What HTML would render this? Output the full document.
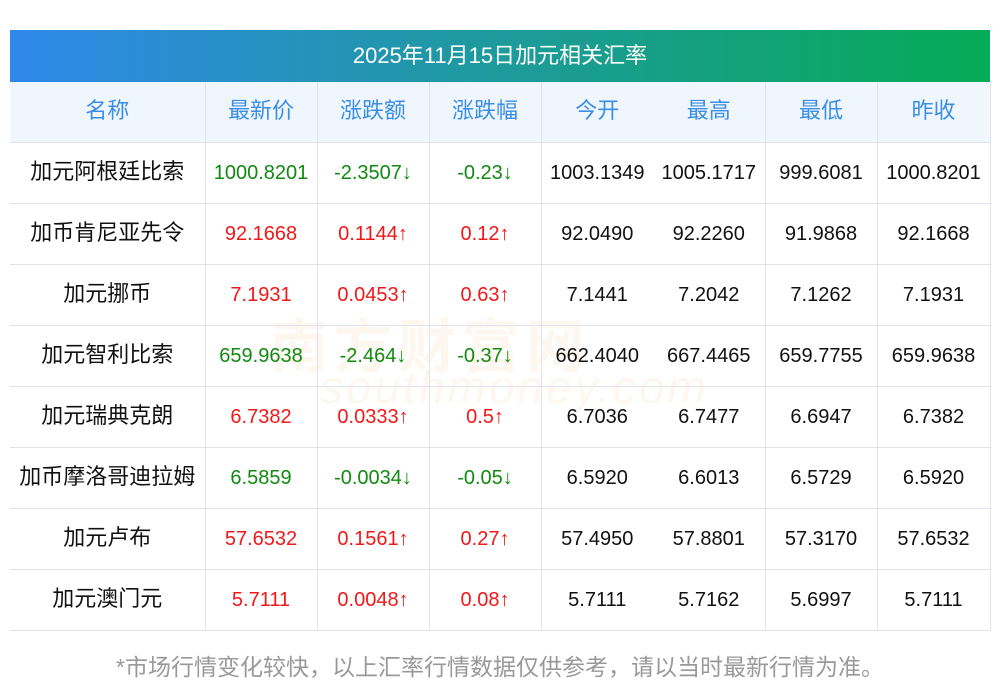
<!DOCTYPE html>
<html><head><meta charset="utf-8"><style>
body{margin:0;background:#fff;font-family:"Liberation Sans","Noto Sans CJK SC",sans-serif;}
.t{position:absolute;left:10px;top:30px;width:980px;}
.title{height:52px;background:linear-gradient(90deg,#2f88ea,#1e9a9c 50%,#05ab55);color:#fff;font-size:22px;line-height:52px;text-align:center;}
table{border-collapse:collapse;width:980px;table-layout:fixed;}
td{height:60px;border-bottom:1px solid #e0e3ec;border-right:1px solid #e0e3ec;text-align:center;font-size:20px;color:#111;padding:0;white-space:nowrap;line-height:24px;}
td.nb{border-right:none;}
td.n{font-size:22px;padding-bottom:2px;height:58px;}
tr.h td{background:#f0f6fe;color:#3a8ee6;height:58px;font-size:22px;padding-bottom:2px;}
.g{color:#118a11}.r{color:#f01818}
.foot{position:absolute;top:648px;left:0;width:1000px;text-align:center;color:#999;font-size:23px;}
.wm{position:absolute;left:270px;top:300px;font-size:58px;color:rgba(240,200,150,.15);font-weight:bold;letter-spacing:6px;}
.wm2{position:absolute;left:320px;top:360px;font-size:46px;color:rgba(240,200,150,.15);font-style:italic;letter-spacing:3px;}
</style></head><body>
<div class="wm">南方财富网</div><div class="wm2">southmoney.com</div>
<div class="t">
<div class="title">2025年11月15日加元相关汇率</div>
<table>
<colgroup><col style="width:195px"><col style="width:112px"><col style="width:112px"><col style="width:112px"><col style="width:112px"><col style="width:112px"><col style="width:112px"><col style="width:113px"></colgroup>
<tr class="h"><td>名称</td><td>最新价</td><td>涨跌额</td><td>涨跌幅</td><td class="nb">今开</td><td>最高</td><td>最低</td><td>昨收</td></tr>
<tr><td class="n">加元阿根廷比索</td><td class="g">1000.8201</td><td class="g">-2.3507↓</td><td class="g">-0.23↓</td><td class="nb">1003.1349</td><td>1005.1717</td><td>999.6081</td><td>1000.8201</td></tr>
<tr><td class="n">加币肯尼亚先令</td><td class="r">92.1668</td><td class="r">0.1144↑</td><td class="r">0.12↑</td><td class="nb">92.0490</td><td>92.2260</td><td>91.9868</td><td>92.1668</td></tr>
<tr><td class="n">加元挪币</td><td class="r">7.1931</td><td class="r">0.0453↑</td><td class="r">0.63↑</td><td class="nb">7.1441</td><td>7.2042</td><td>7.1262</td><td>7.1931</td></tr>
<tr><td class="n">加元智利比索</td><td class="g">659.9638</td><td class="g">-2.464↓</td><td class="g">-0.37↓</td><td class="nb">662.4040</td><td>667.4465</td><td>659.7755</td><td>659.9638</td></tr>
<tr><td class="n">加元瑞典克朗</td><td class="r">6.7382</td><td class="r">0.0333↑</td><td class="r">0.5↑</td><td class="nb">6.7036</td><td>6.7477</td><td>6.6947</td><td>6.7382</td></tr>
<tr><td class="n">加币摩洛哥迪拉姆</td><td class="g">6.5859</td><td class="g">-0.0034↓</td><td class="g">-0.05↓</td><td class="nb">6.5920</td><td>6.6013</td><td>6.5729</td><td>6.5920</td></tr>
<tr><td class="n">加元卢布</td><td class="r">57.6532</td><td class="r">0.1561↑</td><td class="r">0.27↑</td><td class="nb">57.4950</td><td>57.8801</td><td>57.3170</td><td>57.6532</td></tr>
<tr><td class="n">加元澳门元</td><td class="r">5.7111</td><td class="r">0.0048↑</td><td class="r">0.08↑</td><td class="nb">5.7111</td><td>5.7162</td><td>5.6997</td><td>5.7111</td></tr>
</table>
</div>
<div class="foot">*市场行情变化较快，以上汇率行情数据仅供参考，请以当时最新行情为准。</div>
</body></html>
